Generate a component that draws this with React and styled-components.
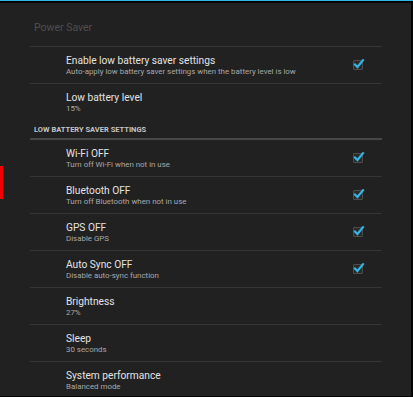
import styled, { createGlobalStyle } from "styled-components";

const GlobalStyle = createGlobalStyle`
  html, body {
    margin: 0;
    padding: 0;
    background: #000;
  }
  body {
    font-family: Roboto, "Noto Sans", "Liberation Sans", sans-serif;
  }
`;

const settings = [
  {
    title: "Enable low battery saver settings",
    summary: "Auto-apply low battery saver settings when the battery level is low",
    checked: true,
  },
  { title: "Low battery level", summary: "15%", last: true },
];

const saverSettings = [
  { title: "Wi-Fi OFF", summary: "Turn off Wi-Fi when not in use", checked: true },
  { title: "Bluetooth OFF", summary: "Turn off Bluetooth when not in use", checked: true },
  { title: "GPS OFF", summary: "Disable GPS", checked: true },
  { title: "Auto Sync OFF", summary: "Disable auto-sync function", checked: true },
  { title: "Brightness", summary: "27%" },
  { title: "Sleep", summary: "30 seconds" },
  { title: "System performance", summary: "Balanced mode" },
];

const App = () => {
  return (
    <>
      <GlobalStyle />
      <Device>
        <Screen>
          <ScreenTitle>Power Saver</ScreenTitle>
          <List>
            {settings.map((s) => (
              <Pref key={s.title} {...s} />
            ))}
            <Category>LOW BATTERY SAVER SETTINGS</Category>
            {saverSettings.map((s) => (
              <Pref key={s.title} {...s} />
            ))}
          </List>
        </Screen>
        <ScrollMark />
      </Device>
    </>
  );
};

const Pref = ({ title, summary, checked, last }) => (
  <Row $last={last}>
    <Texts>
      <Title>{title}</Title>
      <Summary>{summary}</Summary>
    </Texts>
    {checked && (
      <CheckBox>
        <svg width="13" height="12" viewBox="0 0 13 12">
          <path
            d="M3 6.6 L5.4 9 L11 2.2"
            fill="none"
            stroke="#33b5e5"
            strokeWidth="2.2"
            strokeLinecap="square"
          />
        </svg>
      </CheckBox>
    )}
  </Row>
);

export default App;

//STYLES_________________________
const Device = styled.div`
  position: relative;
  width: 413px;
  height: 397px;
  box-sizing: border-box;
  border-top: 1px solid #33b5e5;
  padding: 2px 2px 1px 0;
  background: #050505;
  overflow: hidden;
`;

const Screen = styled.div`
  height: 100%;
  background: #212121;
  overflow: hidden;
`;

const ScreenTitle = styled.div`
  box-sizing: border-box;
  height: 44px;
  margin: 0 29px 0 30px;
  padding: 19px 0 0 4px;
  border-bottom: 1px solid #363636;
  font-size: 10.5px;
  line-height: 12px;
  color: #4e4e4e;
`;

const List = styled.div`
  display: flex;
  flex-direction: column;
  margin: 0 29px 0 30px;
`;

const Row = styled.div`
  display: flex;
  align-items: center;
  height: 36px;
  flex-shrink: 0;
  padding: 0 19px 0 36px;
  border-bottom: ${(p) => (p.$last ? "none" : "1px solid #363636")};
`;

const Texts = styled.div`
  flex: 1;
  display: flex;
  flex-direction: column;
  padding-top: 2px;
`;

const Title = styled.div`
  font-size: 10.2px;
  line-height: 12px;
  color: #e3e3e3;
  white-space: nowrap;
`;

const Summary = styled.div`
  font-size: 7.9px;
  line-height: 10.5px;
  color: #a8a8a8;
  white-space: nowrap;
`;

const Category = styled.div`
  box-sizing: border-box;
  height: 20px;
  flex-shrink: 0;
  padding: 5px 0 0 4px;
  border-bottom: 2px solid #474747;
  font-size: 7.5px;
  font-weight: 700;
  line-height: 10px;
  color: #c4c4c4;
`;

const CheckBox = styled.div`
  position: relative;
  width: 8px;
  height: 8px;
  border: 1px solid #4c4c4c;
  background: #2a2a2a;
  border-radius: 1px;

  svg {
    position: absolute;
    left: -2px;
    top: -3px;
  }
`;

const ScrollMark = styled.div`
  position: absolute;
  left: 0;
  top: 165px;
  width: 3px;
  height: 33px;
  background: #f00000;
`;
